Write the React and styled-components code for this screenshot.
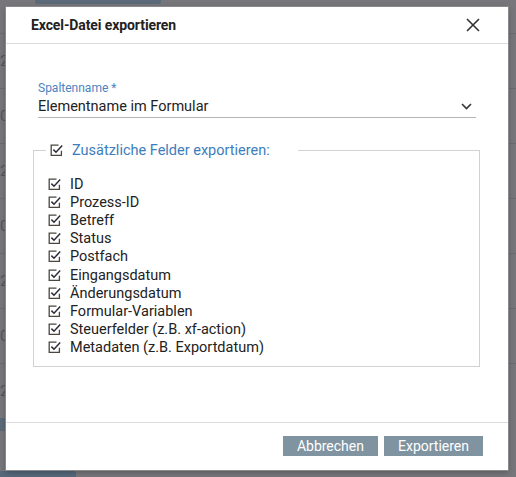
import styled, { createGlobalStyle } from "styled-components";

const GlobalStyle = createGlobalStyle`
  html, body {
    margin: 0;
    padding: 0;
    width: 516px;
    height: 477px;
    overflow: hidden;
    font-family: Roboto, "Liberation Sans", Arial, sans-serif;
  }
`;

const fields = [
  "ID",
  "Prozess-ID",
  "Betreff",
  "Status",
  "Postfach",
  "Eingangsdatum",
  "Änderungsdatum",
  "Formular-Variablen",
  "Steuerfelder (z.B. xf-action)",
  "Metadaten (z.B. Exportdatum)",
];

const bgRows = ["2", "0", "2", "0", "2", "0", "2"];

function CheckIcon() {
  return (
    <svg width="13" height="13" viewBox="0 0 13 13" fill="none">
      <path d="M8.5 1.2H1.2v10.2h10.2V6.8" stroke="#4b4640" strokeWidth="1.3" />
      <path d="M3.4 5.6l2.6 2.6L12.2 1.6" stroke="#2b2b38" strokeWidth="1.5" />
    </svg>
  );
}

export default function App() {
  return (
    <Page>
      <GlobalStyle />
      <TopButton />
      <BgTable>
        {bgRows.map((n, i) => (
          <BgRow key={i}>{n}</BgRow>
        ))}
      </BgTable>
      <SideTag />
      <BottomTag />

      <Dialog>
        <Header>
          <Title>Excel-Datei exportieren</Title>
          <CloseButton aria-label="close">
            <svg width="14" height="14" viewBox="0 0 14 14">
              <path d="M1 1l12 12M13 1L1 13" stroke="#333" strokeWidth="1.6" />
            </svg>
          </CloseButton>
        </Header>

        <Body>
          <SelectField>
            <Label>Spaltenname *</Label>
            <SelectRow>
              <span>Elementname im Formular</span>
              <svg width="11" height="7" viewBox="0 0 11 7">
                <path d="M1 1l4.5 4.5L10 1" stroke="#333" strokeWidth="1.6" fill="none" />
              </svg>
            </SelectRow>
          </SelectField>

          <Group>
            <Legend>
              <CheckIcon />
              <LegendText>Zusätzliche Felder exportieren:</LegendText>
            </Legend>
            <FieldList>
              {fields.map((f) => (
                <FieldItem key={f}>
                  <CheckIcon />
                  <span>{f}</span>
                </FieldItem>
              ))}
            </FieldList>
          </Group>
        </Body>

        <Footer>
          <Button>Abbrechen</Button>
          <Button>Exportieren</Button>
        </Footer>
      </Dialog>
    </Page>
  );
}

const Page = styled.div`
  position: relative;
  width: 516px;
  height: 477px;
  background: #77767a;
  overflow: hidden;
`;

const TopButton = styled.div`
  position: absolute;
  left: 35px;
  top: -10px;
  width: 126px;
  height: 14px;
  background: #5b6a79;
  border-radius: 2px;
`;

const BgTable = styled.div`
  padding-top: 33px;
`;

const BgRow = styled.div`
  height: 54px;
  border-top: 1px solid #6c6b6f;
  color: #555459;
  font-size: 15px;
  line-height: 54px;
  padding-left: 0;
`;

const SideTag = styled.div`
  position: absolute;
  left: 0;
  top: 418px;
  width: 6px;
  height: 13px;
  background: #5b6a79;
`;

const BottomTag = styled.div`
  position: absolute;
  left: 0;
  top: 471px;
  width: 76px;
  height: 10px;
  background: #56687a;
  border-radius: 0 3px 0 0;
`;

const Dialog = styled.div`
  position: absolute;
  left: 6px;
  top: 7px;
  width: 502px;
  height: 463px;
  background: #fff;
  box-shadow: 0 0 0 1px #8a898c, 0 2px 6px rgba(0, 0, 0, 0.3);
  display: flex;
  flex-direction: column;
`;

const Header = styled.div`
  height: 37px;
  box-sizing: border-box;
  border-bottom: 1px solid #dcdcdc;
  display: flex;
  align-items: center;
  justify-content: space-between;
  padding: 0 28px 0 25px;
`;

const Title = styled.h1`
  margin: 0;
  font-size: 14px;
  font-weight: 700;
  color: #222;
  letter-spacing: -0.1px;
`;

const CloseButton = styled.button`
  border: none;
  background: none;
  padding: 0;
  display: flex;
  cursor: pointer;
`;

const Body = styled.div`
  flex: 1;
  padding: 37px 28px 0 27px;
`;

const SelectField = styled.div`
  margin: 0 4px 0 5px;
`;

const Label = styled.div`
  font-size: 12px;
  color: #4a84c0;
  line-height: 14px;
`;

const SelectRow = styled.div`
  display: flex;
  align-items: center;
  justify-content: space-between;
  height: 22px;
  padding-right: 4px;
  border-bottom: 1px solid #b5b5b5;
  font-size: 14.5px;
  color: #222;
`;

const Group = styled.fieldset`
  margin: 23px 0 0;
  padding: 0;
  border: 1px solid #d2d2d2;
  height: 226px;
  box-sizing: border-box;
`;

const Legend = styled.legend`
  margin-left: 12px;
  padding: 0 28px 0 4px;
  display: flex;
  align-items: center;
  gap: 9px;
  height: 18px;
`;

const LegendText = styled.span`
  font-size: 14.5px;
  color: #3d7dbd;
`;

const FieldList = styled.ul`
  list-style: none;
  margin: 16px 0 0;
  padding: 0 0 0 14px;
`;

const FieldItem = styled.li`
  display: flex;
  align-items: center;
  gap: 9px;
  height: 18.2px;
  font-size: 14.5px;
  color: #222;
`;

const Footer = styled.div`
  height: 48px;
  box-sizing: border-box;
  border-top: 1px solid #dcdcdc;
  display: flex;
  justify-content: flex-end;
  align-items: flex-start;
  gap: 6px;
  padding: 13px 25px 0 0;
`;

const Button = styled.button`
  height: 20px;
  border: none;
  background: #7f93a1;
  color: #fff;
  font-family: Roboto, "Liberation Sans", Arial, sans-serif;
  font-size: 14px;
  padding: 0 14px;
  line-height: 20px;
`;
